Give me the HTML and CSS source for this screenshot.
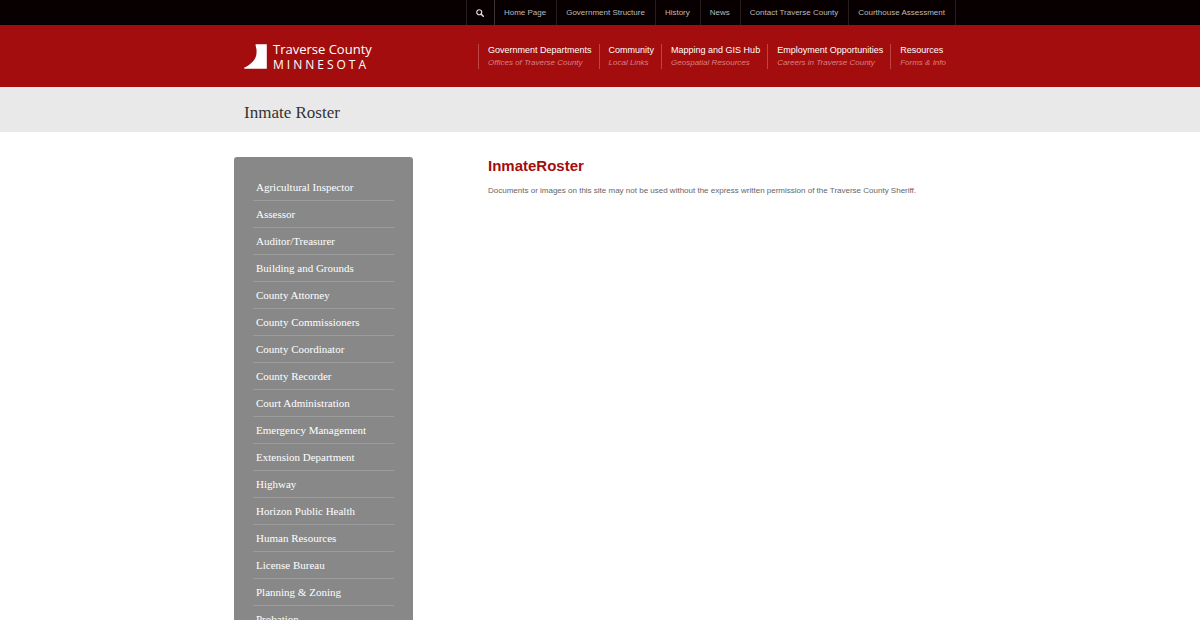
FILE: index.html
```html
<!DOCTYPE html>
<html lang="en">
<head>
  <meta charset="UTF-8">
  <meta name="viewport" content="width=device-width, initial-scale=1.0">
  <title>Inmate Roster - Traverse County</title>
  <link rel="stylesheet" href="styles.css">
</head>
<body>
  <div class="topbar">
    <div class="container topbar-inner">
      <button class="search-btn" type="button" aria-label="Search">
        <svg viewBox="0 0 16 16" width="8" height="8">
          <circle cx="6.5" cy="6.5" r="5" fill="none" stroke="#ddd" stroke-width="2.4"/>
          <path d="M10.2 10.2L14.5 14.5" stroke="#ddd" stroke-width="3" stroke-linecap="round"/>
        </svg>
      </button>
      <nav class="top-nav">
        <a href="#">Home Page</a>
        <a href="#">Government Structure</a>
        <a href="#">History</a>
        <a href="#">News</a>
        <a href="#">Contact Traverse County</a>
        <a href="#">Courthouse Assessment</a>
      </nav>
    </div>
  </div>
  <header class="header">
    <div class="container header-inner">
      <a class="logo" href="#">
        <svg viewBox="0 0 23 25" width="23" height="25">
          <path d="M11.6 0.3H22.8V24.7H0.3V23.4C3 22.4 5 21.2 7 19.2C9.6 16.8 11.6 14.6 12.2 11.6C12.6 9 12.8 6 12.2 4C11.8 2.6 11.5 1.6 11.6 0.3Z" fill="#fff"/>
        </svg>
        <span class="logo-text">
          <span class="logo-name">Traverse County</span>
          <span class="logo-state">MINNESOTA</span>
        </span>
      </a>
      <nav class="main-nav">
        <a href="#">Government Departments<em>Offices of Traverse County</em></a>
        <a href="#">Community<em>Local Links</em></a>
        <a href="#">Mapping and GIS Hub<em>Geospatial Resources</em></a>
        <a href="#">Employment Opportunities<em>Careers in Traverse County</em></a>
        <a href="#">Resources<em>Forms &amp; Info</em></a>
      </nav>
    </div>
  </header>
  <div class="page-title">
    <div class="container">
      <h1>Inmate Roster</h1>
    </div>
  </div>
  <div class="container main">
    <aside class="sidebar">
      <ul>
        <li><a href="#">Agricultural Inspector</a></li>
        <li><a href="#">Assessor</a></li>
        <li><a href="#">Auditor/Treasurer</a></li>
        <li><a href="#">Building and Grounds</a></li>
        <li><a href="#">County Attorney</a></li>
        <li><a href="#">County Commissioners</a></li>
        <li><a href="#">County Coordinator</a></li>
        <li><a href="#">County Recorder</a></li>
        <li><a href="#">Court Administration</a></li>
        <li><a href="#">Emergency Management</a></li>
        <li><a href="#">Extension Department</a></li>
        <li><a href="#">Highway</a></li>
        <li><a href="#">Horizon Public Health</a></li>
        <li><a href="#">Human Resources</a></li>
        <li><a href="#">License Bureau</a></li>
        <li><a href="#">Planning &amp; Zoning</a></li>
        <li><a href="#">Probation</a></li>
      </ul>
    </aside>
    <main class="content">
      <h2>InmateRoster</h2>
      <p>Documents or images on this site may not be used without the express written permission of the Traverse County Sheriff.</p>
    </main>
  </div>
</body>
</html>
```
FILE: styles.css
```css
*{
  margin: 0;
  padding: 0;
  box-sizing: border-box;
}
body{
  font-family: "Liberation Sans", Arial, sans-serif;
  font-size: 8px;
  color: #666;
  background-color: #fff;
}
a{
  text-decoration: none;
}
.container{
  max-width: 732px;
  margin: 0 auto;
  padding: 0 10px;
}
.topbar{
  background-color: #080000;
}
.topbar-inner{
  display: flex;
  justify-content: flex-end;
  line-height: 25px;
}
.search-btn{
  width: 29px;
  border: 0;
  border-left: 1px solid #262020;
  border-right: 1px solid #3a3434;
  background: none;
  display: flex;
  align-items: center;
  justify-content: center;
}
.top-nav{
  display: flex;
}
.top-nav a{
  padding: 0 10px 0 9px;
  border-right: 1px solid #262020;
  color: #bbb;
}
.header{
  background-color: #a30d0e;
}
.header-inner{
  display: flex;
  justify-content: space-between;
  align-items: center;
  height: 62px;
}
.logo{
  display: flex;
  align-items: center;
  gap: 6px;
  color: #fff;
  font-family: "Open Sans", "Noto Sans", sans-serif;
  font-size: 12px;
}
.logo-text{
  display: flex;
  flex-direction: column;
  padding-top: 2px;
  line-height: 15px;
}
.logo-name{
  font-size: 13px;
}
.logo-state{
  letter-spacing: 3px;
}
.main-nav{
  display: flex;
  gap: 7px;
}
.main-nav a{
  padding-left: 9px;
  border-left: 1px solid #bd4546;
  color: #fff;
  font-size: 9px;
  line-height: 13px;
}
.main-nav em{
  display: block;
  color: #d98080;
  font-size: 8px;
  line-height: 12px;
}
.main-nav a:last-child{
  padding-right: 10px;
}
.page-title{
  background-color: #e9e9e9;
}
.page-title h1{
  padding: 8px 0 1px;
  color: #333;
  font-family: "Liberation Serif", "Times New Roman", serif;
  font-size: 17px;
  font-weight: normal;
  line-height: 36px;
}
.main{
  display: flex;
  gap: 75px;
  margin-top: 25px;
  padding-left: 0;
}
.sidebar{
  flex: 0 0 179px;
  padding: 17px 19px 30px;
  border-radius: 3px;
  background-color: #888;
}
.sidebar ul{
  list-style: none;
}
.sidebar li{
  border-bottom: 1px solid #9c9c9c;
}
.sidebar a{
  display: block;
  padding-left: 3px;
  color: #fff;
  font-family: "Liberation Serif", "Times New Roman", serif;
  font-size: 11px;
  line-height: 26px;
}
.content{
  flex: 1;
}
.content h2{
  color: #a30d0e;
  font-size: 15px;
  line-height: 18px;
}
.content p{
  margin-top: 9px;
  line-height: 13px;
}
```
